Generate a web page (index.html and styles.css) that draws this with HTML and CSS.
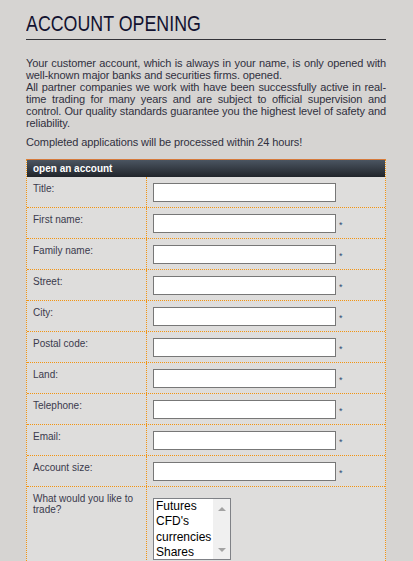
FILE: index.html
```html
<!DOCTYPE html>
<html lang="en">
<head>
    <meta charset="UTF-8">
    <meta name="viewport" content="width=device-width, initial-scale=1.0">
    <title>Account opening</title>
    <link rel="stylesheet" href="styles.css">
</head>
<body>
    <div class="page">
        <h1 class="title"><span>ACCOUNT OPENING</span></h1>
        <p class="intro">Your customer account, which is always in your name, is only opened with well-known major banks and securities firms. opened.<br>All partner companies we work with have been successfully active in real-time trading for many years and are subject to official supervision and control. Our quality standards guarantee you the highest level of safety and reliability.</p>
        <p class="note">Completed applications will be processed within 24 hours!</p>

        <form class="signup">
            <div class="signup-head">open an account</div>
            <div class="row">
                <label class="label">Title:</label>
                <div class="field"><input type="text"></div>
            </div>
            <div class="row">
                <label class="label">First name:</label>
                <div class="field"><input type="text"><span class="req">*</span></div>
            </div>
            <div class="row">
                <label class="label">Family name:</label>
                <div class="field"><input type="text"><span class="req">*</span></div>
            </div>
            <div class="row">
                <label class="label">Street:</label>
                <div class="field"><input type="text"><span class="req">*</span></div>
            </div>
            <div class="row">
                <label class="label">City:</label>
                <div class="field"><input type="text"><span class="req">*</span></div>
            </div>
            <div class="row">
                <label class="label">Postal code:</label>
                <div class="field"><input type="text"><span class="req">*</span></div>
            </div>
            <div class="row">
                <label class="label">Land:</label>
                <div class="field"><input type="text"><span class="req">*</span></div>
            </div>
            <div class="row">
                <label class="label">Telephone:</label>
                <div class="field"><input type="text"><span class="req">*</span></div>
            </div>
            <div class="row">
                <label class="label">Email:</label>
                <div class="field"><input type="text"><span class="req">*</span></div>
            </div>
            <div class="row">
                <label class="label">Account size:</label>
                <div class="field"><input type="text"><span class="req">*</span></div>
            </div>
            <div class="row row-tall">
                <label class="label">What would you like to trade?</label>
                <div class="field">
                    <div class="trade-box">
                        <select class="trade" multiple size="4">
                            <option>Futures</option>
                            <option>CFD's</option>
                            <option>currencies</option>
                            <option>Shares</option>
                        </select>
                        <div class="trade-scroll">
                            <span class="arrow-up"></span>
                            <span class="arrow-down"></span>
                        </div>
                    </div>
                </div>
            </div>
        </form>
    </div>
</body>
</html>
```

FILE: styles.css
```css
body {
    margin: 0;
    background-color: #d6d4d2;
    font-family: "Liberation Sans", Arial, sans-serif;
    color: #30303e;
}
.page {
    width: 360px;
    margin-left: 26px;
}
.title {
    margin: 11px 0 0;
    padding-bottom: 3px;
    border-bottom: 1px solid #333338;
    font-size: 22px;
    font-weight: normal;
    line-height: 25px;
    color: #121230;
}
/* narrow headline face */
.title span {
    display: inline-block;
    transform: scaleX(0.81);
    transform-origin: left;
}
.intro {
    margin: 17px 0 0;
    font-size: 11px;
    line-height: 12px;
    letter-spacing: -0.1px;
    text-align: justify;
}
.note {
    margin: 7px 0 0;
    font-size: 11px;
    line-height: 12px;
    letter-spacing: -0.1px;
}

/* form table */
.signup {
    margin-top: 11px;
    border-top: 1px solid #d67a3c;
    border-left: 1px dotted #f29412;
    border-right: 1px dotted #f29412;
    background-color: #dedddc;
}
.signup-head {
    height: 17px;
    padding-left: 6px;
    background: linear-gradient(#4b5561, #20242a);
    color: #ffffff;
    font-size: 10px;
    font-weight: bold;
    line-height: 17px;
}
.row {
    display: flex;
    height: 31px;
    box-sizing: border-box;
    border-bottom: 1px dotted #f29412;
}
.row-tall {
    height: 90px;
}
.label {
    width: 120px;
    box-sizing: border-box;
    padding: 6px 6px 0;
    border-right: 1px dotted #f29412;
    font-size: 10px;
    line-height: 11px;
    color: #3a3a4c;
}
.field {
    display: flex;
    align-items: flex-start;
    padding: 6px 0 0 6px;
}
.field input {
    width: 183px;
    height: 19px;
    box-sizing: border-box;
    margin: 0;
    padding: 0 2px;
    border: 1px solid #777777;
    background-color: #ffffff;
}
.req {
    margin: 7px 0 0 3px;
    font-size: 9px;
    line-height: 9px;
    color: #2c4a74;
}

/* list box with its scroll rail */
.trade-box {
    display: flex;
    width: 78px;
    height: 62px;
    box-sizing: border-box;
    margin-top: 5px;
    border: 1px solid #7f8186;
    background-color: #ffffff;
}
.trade {
    flex: 1;
    min-width: 0;
    height: 60px;
    margin: 0;
    padding: 0;
    border: 0;
    outline: 0;
    background-color: #ffffff;
    font-family: "Liberation Sans", Arial, sans-serif;
    font-size: 12px;
    color: #000000;
    overflow: hidden;
}
.trade option {
    padding: 0 2px 1px;
}
.trade-scroll {
    width: 17px;
    display: flex;
    flex-direction: column;
    justify-content: space-between;
    align-items: center;
    padding: 8px 0 7px;
    box-sizing: border-box;
    background-color: #f0f0f0;
}
.arrow-up,
.arrow-down {
    width: 0;
    height: 0;
    border-left: 4px solid transparent;
    border-right: 4px solid transparent;
}
.arrow-up {
    border-bottom: 4px solid #a3a3a3;
}
.arrow-down {
    border-top: 4px solid #a3a3a3;
}
```
